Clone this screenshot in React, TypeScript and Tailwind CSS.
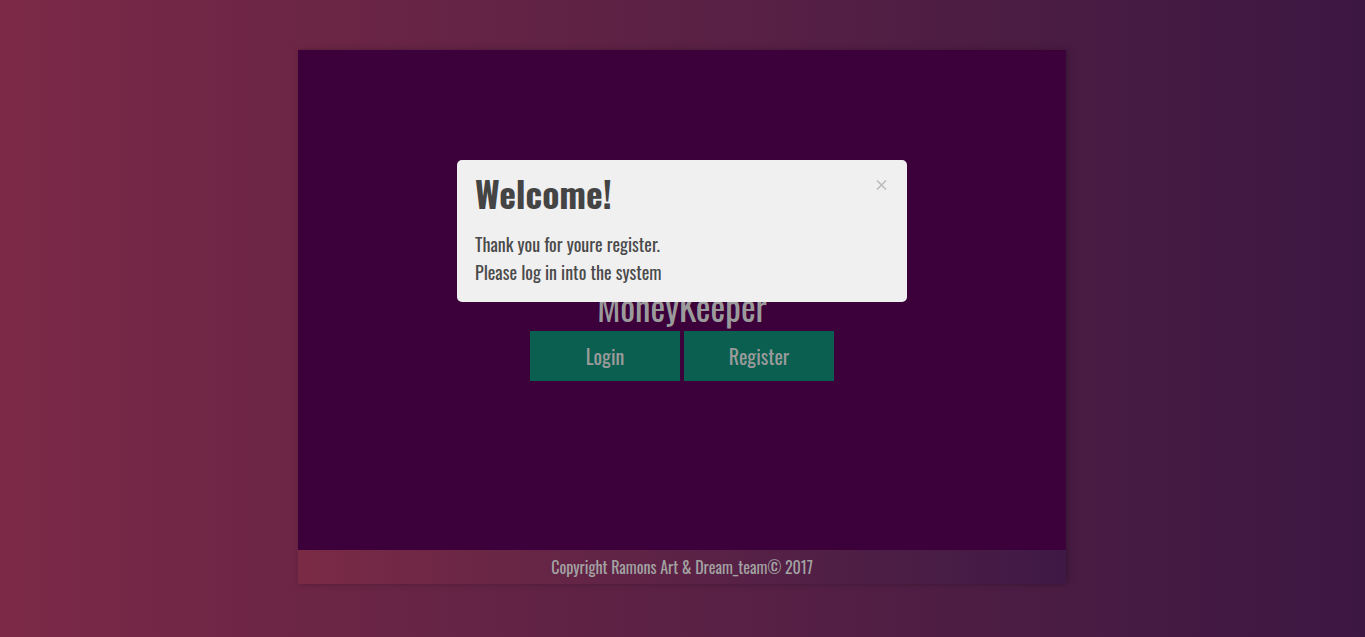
const font = "font-['Oswald','Liberation_Sans_Narrow','DejaVu_Sans_Condensed',sans-serif]";

const WelcomeModal = () => {
  return (
    <div className="absolute left-[457px] top-[160px] w-[450px] rounded-[5px] bg-[#f0f0f0] px-[18px] pt-[10px] pb-[16px] text-[#444]">
      <div className="flex items-start justify-between">
        <h2 className="text-[35.5px] font-bold leading-[46px] text-[#444]">Welcome!</h2>
        <button className="mt-[10px] mr-[2px]" aria-label="close">
          <svg width="11" height="10" viewBox="0 0 11 10" className="text-[#bdbdbd]">
            <path d="M1 0.5L10 9.5M10 0.5L1 9.5" stroke="currentColor" strokeWidth="1.6" fill="none" />
          </svg>
        </button>
      </div>
      <div className="mt-[14px] text-[18px] leading-[28px] text-[#4a4a4a]">
        <p>Thank you for youre register.</p>
        <p>Please log in into the system</p>
      </div>
    </div>
  );
};

const App = () => {
  return (
    <div className={`relative min-h-screen w-full bg-gradient-to-r from-[#7b2946] to-[#3c1742] pt-[50px] ${font}`}>
      <div className="ml-[298px] w-[768px] shadow-[2px_0_6px_rgba(0,0,0,0.25)]">
        <main className="flex h-[500px] flex-col items-center bg-[#3c003b] pt-[234px]">
          <h1 className="text-[35px] leading-[44px] text-[#9b9b9b]">MoneyKeeper</h1>
          <div className="mt-[3px] flex gap-[4px]">
            <button className="h-[50px] w-[150px] bg-[#0b5f51] text-[20px] text-[#9b9b9b]">Login</button>
            <button className="h-[50px] w-[150px] bg-[#0b5f51] text-[20px] text-[#9b9b9b]">Register</button>
          </div>
        </main>
        <footer className="flex h-[34px] items-center justify-center bg-gradient-to-r from-[#7a2a45] to-[#3f1945] text-[16px] text-[#a3a3a3]">
          Copyright Ramons Art &amp; Dream_team© 2017
        </footer>
      </div>
      <WelcomeModal />
    </div>
  );
};

export default App;
